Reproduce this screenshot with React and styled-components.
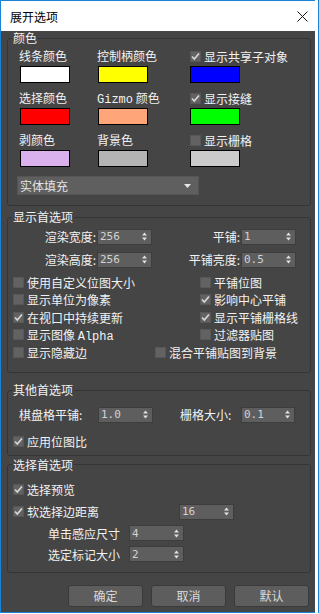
import React from "react";
import styled, { createGlobalStyle } from "styled-components";

const GlobalStyle = createGlobalStyle`
  html, body {
    margin: 0;
    padding: 0;
    background: #ffffff;
  }
  body {
    font-family: "Noto Sans CJK SC", "Noto Sans", sans-serif;
    font-size: 12px;
  }
`;

const Mono = styled.span`
  font-family: "Liberation Mono", "DejaVu Sans Mono", monospace;
  font-size: 12px;
`;

const colorCells = [
  { label: "线条颜色", color: "#ffffff" },
  { label: "控制柄颜色", color: "#ffff00" },
  { label: "显示共享子对象", color: "#0000ff", check: true },
  { label: "选择颜色", color: "#ff0000" },
  { label: <><Mono>Gizmo</Mono> 颜色</>, color: "#ffa57a" },
  { label: "显示接缝", color: "#00ff00", check: true },
  { label: "剥颜色", color: "#dab1ec" },
  { label: "背景色", color: "#b4b4b4" },
  { label: "显示栅格", color: "#cbcbcb", check: false },
];

const displayChecks = [
  [["使用自定义位图大小", false], ["平铺位图", false]],
  [["显示单位为像素", false], ["影响中心平铺", true]],
  [["在视口中持续更新", true], ["显示平铺栅格线", true]],
  [[<>显示图像 <Mono>Alpha</Mono></>, false], ["过滤器贴图", false]],
  [["显示隐藏边", false], ["混合平铺贴图到背景", false]],
];

export default function App() {
  return (
    <>
      <GlobalStyle />
      <Window>
        <TitleBar>
          <Title>展开选项</Title>
          <svg width="11" height="11" viewBox="0 0 11 11">
            <path d="M0.5 0.5 L10.5 10.5 M10.5 0.5 L0.5 10.5" stroke="#111" strokeWidth="1" />
          </svg>
        </TitleBar>
        <Body>
          <Group $top={0}>
            <Legend>颜色</Legend>
            <ColorGrid>
              {colorCells.map((c, i) => (
                <Cell key={i}>
                  {c.check === undefined ? (
                    <CellLabel>{c.label}</CellLabel>
                  ) : (
                    <CheckItem label={c.label} checked={c.check} />
                  )}
                  <Swatch $color={c.color} />
                </Cell>
              ))}
            </ColorGrid>
            <Dropdown>
              <span>实体填充</span>
              <svg width="7" height="4" viewBox="0 0 7 4">
                <polygon points="0,0 7,0 3.5,4" fill="#e6e6e6" />
              </svg>
            </Dropdown>
            <Pad $h={10} />
          </Group>

          <Group $top={4}>
            <Legend>显示首选项</Legend>
            <SpinGrid>
              <SpinLabel>渲染宽度:</SpinLabel>
              <Spinner value="256" />
              <SpinLabel>平铺:</SpinLabel>
              <Spinner value="1" />
              <SpinLabel>渲染高度:</SpinLabel>
              <Spinner value="256" />
              <SpinLabel>平铺亮度:</SpinLabel>
              <Spinner value="0.5" />
            </SpinGrid>
            <CheckList>
              {displayChecks.map((row, i) => (
                <CheckRow key={i} $split={i === 4 ? 142 : 187}>
                  <CheckItem label={row[0][0]} checked={row[0][1]} />
                  <CheckItem label={row[1][0]} checked={row[1][1]} />
                </CheckRow>
              ))}
            </CheckList>
            <Pad $h={11} />
          </Group>

          <Group $top={10}>
            <Legend>其他首选项</Legend>
            <OtherRow>
              <OtherLabel $w={79}>棋盘格平铺:</OtherLabel>
              <Spinner value="1.0" />
              <OtherLabel $w={61} $left={27}>栅格大小:</OtherLabel>
              <Spinner value="0.1" $w={54} />
            </OtherRow>
            <CheckList $top={10}>
              <CheckRow $split={187}>
                <CheckItem label="应用位图比" checked />
              </CheckRow>
            </CheckList>
            <Pad $h={4} />
          </Group>

          <Group $top={2}>
            <Legend>选择首选项</Legend>
            <SelectList>
              <SelectRow $cols="166px 55px">
                <CheckItem label="选择预览" checked />
              </SelectRow>
              <SelectRow $cols="166px 55px">
                <CheckItem label="软选择边距离" checked />
                <Spinner value="16" />
              </SelectRow>
              <SelectRow $cols="81px 55px" $h={21} $indent={35}>
                <span>单击感应尺寸</span>
                <Spinner value="4" />
              </SelectRow>
              <SelectRow $cols="81px 55px" $h={21} $indent={35}>
                <span>选定标记大小</span>
                <Spinner value="2" />
              </SelectRow>
            </SelectList>
            <Pad $h={7} />
          </Group>

          <Buttons>
            <Button>确定</Button>
            <Button>取消</Button>
            <Button>默认</Button>
          </Buttons>
        </Body>
      </Window>
    </>
  );
}

function CheckItem({ label, checked }) {
  return (
    <Check>
      <Box>
        {checked && (
          <svg width="11" height="11" viewBox="0 0 11 11">
            <polyline points="2,5.5 4.3,8 9,2.5" fill="none" stroke="#d6d6d6" strokeWidth="1.7" />
          </svg>
        )}
      </Box>
      <span>{label}</span>
    </Check>
  );
}

function Spinner({ value, $w }) {
  return (
    <Spin $w={$w}>
      <SpinValue>{value}</SpinValue>
      <svg width="5" height="9" viewBox="0 0 5 9">
        <polygon points="0,3.5 2.5,0.5 5,3.5" fill="#e0e0e0" />
        <polygon points="0,5.5 2.5,8.5 5,5.5" fill="#e0e0e0" />
      </svg>
    </Spin>
  );
}

const Window = styled.div`
  width: 314px;
  border: 1px solid #1883d7;
  border-right: none;
  box-shadow: 3px 0 0 #ffffff, 4px 0 0 #1883d7;
`;

const TitleBar = styled.div`
  height: 30px;
  display: flex;
  align-items: center;
  justify-content: space-between;
  padding: 0 7px 0 9px;
  background: #ffffff;
`;

const Title = styled.div`
  font-size: 12px;
  color: #000;
`;

const Body = styled.div`
  height: 581px;
  box-sizing: border-box;
  background: #454545;
  padding: 0 4px 0 6px;
  color: #f2f2f2;
  display: flex;
  flex-direction: column;
`;

const Group = styled.fieldset`
  margin: ${(p) => p.$top}px 0 0;
  padding: 0;
  border: 1px solid #353535;
  border-radius: 3px;
  min-width: 0;
`;

const Legend = styled.legend`
  margin-left: 4px;
  padding: 0 1px;
  font-size: 12px;
  line-height: 14px;
  color: #f2f2f2;
`;

const Pad = styled.div`
  height: ${(p) => p.$h}px;
`;

const ColorGrid = styled.div`
  display: grid;
  grid-template-columns: 78px 92px 1fr;
  row-gap: 7px;
  padding: 3px 0 0 12px;
`;

const Cell = styled.div`
  display: flex;
  flex-direction: column;
  gap: 2px;
`;

const CellLabel = styled.div`
  height: 16px;
  line-height: 16px;
  margin-left: -1px;
  white-space: nowrap;
`;

const Swatch = styled.div`
  width: 50px;
  height: 17px;
  box-sizing: border-box;
  border: 1px solid #000;
  background: ${(p) => p.$color};
`;

const Dropdown = styled.div`
  margin: 9px 0 0 9px;
  width: 182px;
  height: 19px;
  box-sizing: border-box;
  background: #5f5f5f;
  border: 1px solid #555;
  display: flex;
  align-items: center;
  justify-content: space-between;
  padding: 0 7px 0 2px;
  color: #e4e4e4;
`;

const Check = styled.div`
  display: flex;
  align-items: center;
  gap: 3px;
  height: 16px;
  white-space: nowrap;
`;

const Box = styled.div`
  width: 11px;
  height: 11px;
  box-sizing: border-box;
  background: #626262;
  border: 1px solid #575757;
  display: flex;
  align-items: center;
  justify-content: center;
  svg {
    flex: none;
  }
`;

const SpinGrid = styled.div`
  display: grid;
  grid-template-columns: 89px 55px 89px 55px;
  row-gap: 6px;
  padding-top: 4px;
  align-items: center;
`;

const SpinLabel = styled.div`
  text-align: right;
  padding-right: 1px;
  white-space: nowrap;
`;

const Spin = styled.div`
  width: ${(p) => p.$w || 55}px;
  height: 16px;
  box-sizing: border-box;
  background: #5e5e5e;
  border: 1px solid #3d3d3d;
  display: flex;
  align-items: center;
  justify-content: space-between;
  padding: 0 4px 0 2px;
`;

const SpinValue = styled.span`
  font-family: "DejaVu Sans Mono", "Liberation Mono", monospace;
  font-size: 11px;
  color: #d2d2d2;
`;

const CheckList = styled.div`
  margin-top: ${(p) => (p.$top === undefined ? 5.5 : p.$top)}px;
  padding-left: 5px;
  display: grid;
  grid-auto-rows: 17.5px;
`;

const CheckRow = styled.div`
  display: grid;
  grid-template-columns: ${(p) => p.$split}px 1fr;
  align-items: center;
`;

const OtherRow = styled.div`
  display: flex;
  align-items: center;
  padding: 9px 0 0 11px;
`;

const OtherLabel = styled.div`
  width: ${(p) => p.$w}px;
  margin-left: ${(p) => p.$left || 0}px;
  white-space: nowrap;
`;

const SelectList = styled.div`
  padding: 7px 0 0 5px;
`;

const SelectRow = styled.div`
  height: ${(p) => p.$h || 22}px;
  display: grid;
  grid-template-columns: ${(p) => p.$cols};
  align-items: center;
  padding-left: ${(p) => p.$indent || 0}px;
  white-space: nowrap;
`;

const Buttons = styled.div`
  display: flex;
  gap: 8px;
  margin: 12px 0 0 61px;
`;

const Button = styled.button`
  width: 75px;
  height: 22px;
  background: #5d5d5d;
  border: 1px solid #3a3a3a;
  border-radius: 3px;
  color: #dadada;
  font-family: "Noto Sans CJK SC", "Noto Sans", sans-serif;
  font-size: 12px;
  padding: 0;
`;
